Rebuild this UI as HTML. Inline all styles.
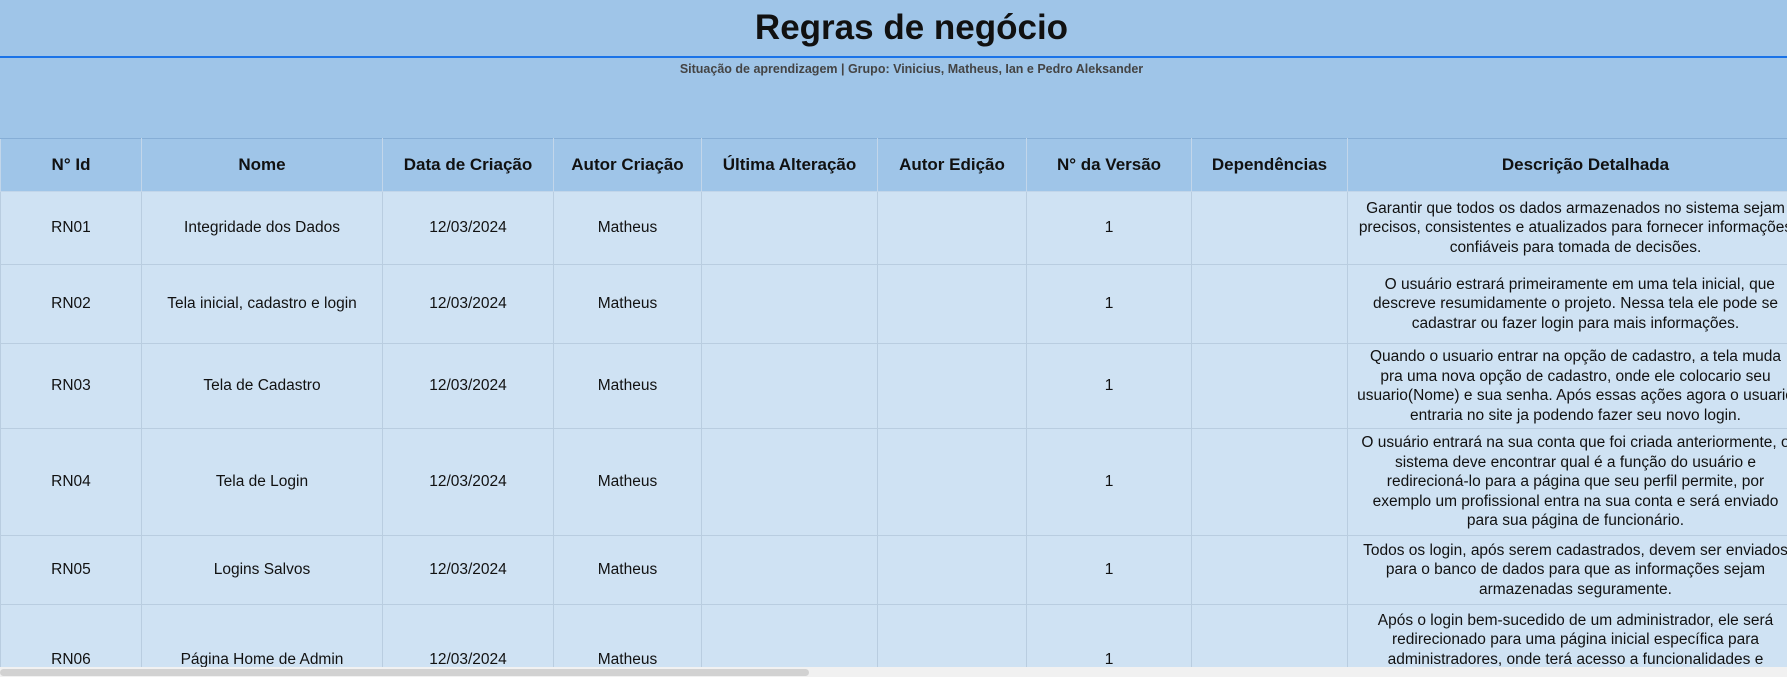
<!DOCTYPE html>
<html><head><meta charset="utf-8"><style>
html,body{margin:0;padding:0;width:1787px;height:677px;overflow:hidden;background:#9fc5e8;font-family:"Liberation Sans",Arial,sans-serif;color:#111}
#w{width:1823px;position:relative;height:677px}
h1{margin:0;height:56px;line-height:56px;text-align:center;font-size:35px;font-weight:bold;color:#111}
.line{height:2px;background:#1a73e8}
.sub{text-align:center;font-size:12.5px;font-weight:bold;color:#444;margin-top:4px;height:76px}
table{position:absolute;top:138px;left:0;width:1823px;border-collapse:collapse;table-layout:fixed}
th{height:52px;padding:0;background:#9fc5e8;font-size:17px;font-weight:bold;border:1px solid #c2d6ea;border-top:1px solid #86aed6}
td{background:#cfe2f3;border:1px solid #b9cde0;text-align:center;font-size:15.5px;line-height:19.5px;padding:0 4px}
td.d{padding:0 20px 0 0}
.sb{position:absolute;left:0;top:667px;width:1787px;height:10px;background:#f1f1f1}
.th{position:absolute;left:0;top:669px;width:809px;height:7px;background:#d2d2d2;border-radius:4px}
</style></head><body><div id="w">
<h1>Regras de negócio</h1><div class="line"></div>
<div class="sub">Situação de aprendizagem | Grupo: Vinicius, Matheus, Ian e Pedro Aleksander</div>
<table>
<colgroup><col style="width:141px"><col style="width:241px"><col style="width:171px"><col style="width:148px"><col style="width:176px"><col style="width:149px"><col style="width:165px"><col style="width:156px"><col style="width:476px"></colgroup>
<tr><th>N° Id</th><th>Nome</th><th>Data de Criação</th><th>Autor Criação</th><th>Última Alteração</th><th>Autor Edição</th><th>N° da Versão</th><th>Dependências</th><th>Descrição Detalhada</th></tr>
<tr style="height:73px"><td>RN01</td><td>Integridade dos Dados</td><td>12/03/2024</td><td>Matheus</td><td></td><td></td><td>1</td><td></td><td class="d">Garantir que todos os dados armazenados no sistema sejam<br>precisos, consistentes e atualizados para fornecer informações<br>confiáveis para tomada de decisões.</td></tr>
<tr style="height:79px"><td>RN02</td><td>Tela inicial, cadastro e login</td><td>12/03/2024</td><td>Matheus</td><td></td><td></td><td>1</td><td></td><td class="d">&nbsp; O usuário estrará primeiramente em uma tela inicial, que<br>descreve resumidamente o projeto. Nessa tela ele pode se<br>cadastrar ou fazer login para mais informações.</td></tr>
<tr style="height:85px"><td>RN03</td><td>Tela de Cadastro</td><td>12/03/2024</td><td>Matheus</td><td></td><td></td><td>1</td><td></td><td class="d">Quando o usuario entrar na opção de cadastro, a tela muda<br>pra uma nova opção de cadastro, onde ele colocario seu<br>usuario(Nome) e sua senha. Após essas ações agora o usuario<br>entraria no site ja podendo fazer seu novo login.</td></tr>
<tr style="height:107px"><td>RN04</td><td>Tela de Login</td><td>12/03/2024</td><td>Matheus</td><td></td><td></td><td>1</td><td></td><td class="d">O usuário entrará na sua conta que foi criada anteriormente, o<br>sistema deve encontrar qual é a função do usuário e<br>redirecioná-lo para a página que seu perfil permite, por<br>exemplo um profissional entra na sua conta e será enviado<br>para sua página de funcionário.</td></tr>
<tr style="height:69px"><td>RN05</td><td>Logins Salvos</td><td>12/03/2024</td><td>Matheus</td><td></td><td></td><td>1</td><td></td><td class="d">Todos os login, após serem cadastrados, devem ser enviados<br>para o banco de dados para que as informações sejam<br>armazenadas seguramente.</td></tr>
<tr style="height:110px"><td>RN06</td><td>Página Home de Admin</td><td>12/03/2024</td><td>Matheus</td><td></td><td></td><td>1</td><td></td><td class="d">Após o login bem-sucedido de um administrador, ele será<br>redirecionado para uma página inicial específica para<br>administradores, onde terá acesso a funcionalidades e<br>ferramentas exclusivas para gerenciar o<br>sistema.</td></tr>
</table>
<div class="sb"></div><div class="th"></div>
</div></body></html>
